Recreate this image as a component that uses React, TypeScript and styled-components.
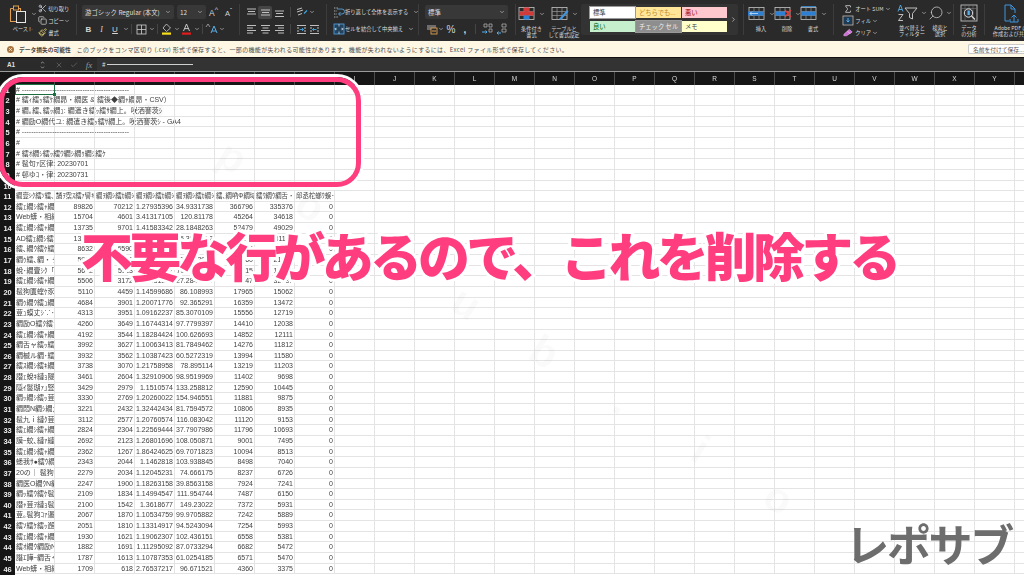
import React from "react";
import styled, { createGlobalStyle } from "styled-components";
import { Scissors, Copy, Paintbrush, Search, Sigma, ChevronDown, ChevronRight, ChevronUp, X, Check } from "lucide-react";

const Global = createGlobalStyle`
  html, body { margin: 0; padding: 0; background: #fff; overflow: hidden; }
  #root { width: 1024px; height: 576px; overflow: hidden; }
`;

const JP = `"Noto Sans CJK JP", "Noto Sans", sans-serif`;

const Page = styled.div`
  position: relative;
  width: 1024px;
  height: 576px;
  overflow: hidden;
  font-family: ${JP};
  background: #fff;
`;
const Blurred = styled.div`
  filter: blur(0.35px);
`;
const Ribbon = styled.div`
  display: flex;
  height: 41px;
  background: #2a2a2a;
  color: #dcdcdc;
  font-size: 5.6px;
  overflow: hidden;
`;
const Group = styled.div<{ $w: number; $pl?: number }>`
  flex: none;
  width: ${(p) => p.$w}px;
  padding-left: ${(p) => p.$pl ?? 0}px;
  box-sizing: border-box;
  display: flex;
`;
const Sep = styled.div`
  flex: none;
  width: 1px;
  height: 31px;
  margin-top: 4px;
  background: #3d3d3d;
`;
const Stack = styled.div`
  display: flex;
  flex-direction: column;
  padding-top: 5px;
  gap: 3px;
`;
const ThreeRows = styled.div`
  display: flex;
  flex-direction: column;
  padding-top: 3px;
  height: 38px;
  box-sizing: border-box;
  justify-content: space-between;
`;
const Line = styled.div`
  display: flex;
  align-items: center;
  height: 14px;
`;
const MiniLine = styled.div`
  display: flex;
  align-items: center;
  height: 11px;
  white-space: nowrap;
`;
const Tool = styled.span<{ $w: number; $active?: boolean }>`
  flex: none;
  width: ${(p) => p.$w}px;
  height: 13px;
  display: inline-flex;
  align-items: center;
  justify-content: center;
  border-radius: 2px;
  background: ${(p) => (p.$active ? "#454545" : "transparent")};
  svg { display: block; }
`;
const MiniSep = styled.span<{ $mx: number }>`
  flex: none;
  width: 1px;
  height: 10px;
  margin: 0 ${(p) => p.$mx}px;
  background: #454545;
`;
const Select = styled.div<{ $w: number; $ml?: number }>`
  flex: none;
  width: ${(p) => p.$w}px;
  margin-left: ${(p) => p.$ml ?? 0}px;
  height: 14px;
  box-sizing: border-box;
  padding: 0 3px;
  background: #383838;
  border-radius: 2px;
  display: flex;
  align-items: center;
  justify-content: space-between;
  font-size: 6.4px;
  color: #dedede;
  white-space: nowrap;
`;
const Letter = styled.span<{ $serif?: boolean; $bold?: boolean; $u?: boolean; $size?: number }>`
  font-family: ${(p) => (p.$serif ? `"Liberation Serif", serif` : `"Liberation Sans", sans-serif`)};
  font-style: ${(p) => (p.$serif ? "italic" : "normal")};
  font-weight: ${(p) => (p.$bold ? 700 : 400)};
  text-decoration: ${(p) => (p.$u ? "underline" : "none")};
  font-size: ${(p) => p.$size ?? 8}px;
  color: #d5d5d5;
`;
const Label = styled.div<{ $w: number }>`
  width: ${(p) => p.$w}px;
  display: flex;
  flex-direction: column;
  align-items: center;
  text-align: center;
  font-size: 5.2px;
  line-height: 6.4px;
  color: #dadada;
  white-space: nowrap;
`;
const BigTool = styled.div<{ $w: number; $top?: number }>`
  flex: none;
  width: ${(p) => p.$w}px;
  display: flex;
  flex-direction: column;
  align-items: center;
  padding-top: ${(p) => p.$top ?? 5}px;
`;
const BigIcon = styled.div`
  height: 18px;
  display: flex;
  align-items: center;
  gap: 2px;
  margin-bottom: 3px;
`;
const Mirror = styled.span`
  display: inline-flex;
  transform: scaleX(-1);
`;
const MiniText = styled.span<{ $w?: number }>`
  display: inline-block;
  ${(p) => (p.$w ? `width: ${p.$w}px;` : "")}
  font-size: 5.3px;
  color: #dcdcdc;
`;
const Gallery = styled.div`
  flex: none;
  width: 157px;
  height: 31px;
  margin-top: 4px;
  background: #333;
  border-radius: 2px;
  box-sizing: border-box;
  padding: 3px 0 0 9px;
  display: grid;
  grid-template-columns: repeat(3, 45px) 10px;
  grid-auto-rows: 11px;
  column-gap: 1px;
  row-gap: 3px;
  align-items: center;
`;
const StyleCell = styled.div<{ $bg: string; $fg: string; $ring?: boolean }>`
  height: 11px;
  background: ${(p) => p.$bg};
  color: ${(p) => p.$fg};
  font-size: 6.3px;
  line-height: 11px;
  padding-left: 3px;
  white-space: nowrap;
  overflow: hidden;
  box-sizing: border-box;
  outline: ${(p) => (p.$ring ? "1px solid #9a9a9a" : "none")};
`;
const GalleryArrow = styled.div`
  grid-column: 4;
  grid-row: 1 / span 2;
  display: flex;
  justify-content: center;
  color: #ccc;
`;

const Notice = styled.div`
  display: flex;
  align-items: center;
  height: 16px;
  background: #fef7e4;
  border-bottom: 1px solid #111;
  color: #4a4a4a;
  font-size: 5.75px;
  white-space: nowrap;
  padding-left: 7px;
`;
const NoticeIcon = styled.span`
  flex: none;
  width: 7px;
  height: 7px;
  border-radius: 50%;
  background: #a8743f;
  display: inline-flex;
  align-items: center;
  justify-content: center;
  color: #fef7e4;
  margin-right: 5px;
`;
const NoticeTitle = styled.b`
  font-weight: 700;
  margin-right: 6px;
  color: #444;
`;
const NoticeBody = styled.span`
  flex: 1;
  font-size: 6px;
  letter-spacing: 0.33px;
`;
const NoticeButton = styled.span`
  flex: none;
  width: 56px;
  height: 10px;
  line-height: 9px;
  box-sizing: border-box;
  background: #fff;
  border: 1px solid #c9c9c9;
  border-right: 0;
  border-radius: 2px 0 0 2px;
  padding-left: 4px;
  overflow: hidden;
  color: #555;
`;

const FormulaBar = styled.div`
  display: flex;
  align-items: center;
  height: 13px;
  background: #2b2b2b;
  border-bottom: 1px solid #9a9a9a;
  color: #dedede;
  font-size: 6.4px;
`;
const NameBox = styled.span`
  flex: none;
  width: 37px;
  padding-left: 7px;
  box-sizing: border-box;
  font-family: "Liberation Sans", sans-serif;
  font-weight: 700;
  font-size: 6.4px;
`;
const StepBox = styled.span`
  flex: none;
  width: 10px;
  display: inline-flex;
  flex-direction: column;
  align-items: center;
  margin-right: 4px;
  color: #ccc;
`;
const BarIcon = styled.span<{ $w: number }>`
  flex: none;
  width: ${(p) => p.$w}px;
  display: inline-flex;
  justify-content: center;
  color: #6e6e6e;
`;
const Fx = styled.span`
  flex: none;
  width: 16px;
  text-align: center;
  font-family: "Liberation Serif", serif;
  font-style: italic;
  font-size: 9px;
  color: #9a9a9a;
`;
const FormulaInput = styled.div`
  flex: 1;
  align-self: stretch;
  padding-left: 5px;
  background: #333;
  display: flex;
  align-items: center;
  overflow: hidden;
  gap: 1px;
`;
const FormulaDash = styled.span`
  width: 86px;
  height: 1px;
  background: #cfcfcf;
`;

const Sheet = styled.div`
  background: #fff;
`;
const HeaderRow = styled.div`
  display: flex;
  height: 12.8px;
  background: #161616;
  color: #d8d8d8;
  font-family: "Liberation Sans", sans-serif;
  font-size: 6.5px;
`;
const Corner = styled.div`
  flex: none;
  width: 15px;
  background: #161616;
`;
const ColHead = styled.div`
  flex: none;
  width: 40px;
  box-sizing: border-box;
  border-right: 1px solid #4c4c4c;
  display: flex;
  align-items: center;
  justify-content: center;
`;
const Row = styled.div`
  display: flex;
  height: 10.65px;
  box-sizing: border-box;
  border-bottom: 1px solid #e4e4e4;
`;
const RowHead = styled.div`
  flex: none;
  width: 15px;
  height: 11px;
  background: #161616;
  color: #eee;
  font-family: "Liberation Sans", sans-serif;
  font-weight: 700;
  font-size: 7.4px;
  line-height: 11.8px;
  text-align: center;
`;
const Cell = styled.div<{ $right?: boolean; $over?: boolean; $small?: boolean }>`
  flex: none;
  position: relative;
  width: 40px;
  box-sizing: border-box;
  border-right: 1px solid #e4e4e4;
  padding: 0 1px 0 1px;
  font-family: "Liberation Sans", ${JP};
  font-size: ${(p) => (p.$small ? 6.4 : 7)}px;
  line-height: 10.8px;
  color: #3f3f3f;
  text-align: ${(p) => (p.$right ? "right" : "left")};
  white-space: nowrap;
  overflow: ${(p) => (p.$over ? "visible" : "hidden")};
`;
const Selected = styled.div`
  position: absolute;
  left: 15px;
  top: 84px;
  width: 40px;
  height: 11px;
  box-sizing: border-box;
  border: 1.2px solid #1d6f42;
  pointer-events: none;
  &::after {
    content: "";
    position: absolute;
    right: -2px;
    bottom: -2px;
    width: 3px;
    height: 3px;
    background: #1d6f42;
  }
`;
const Watermark = styled.div`
  position: absolute;
  left: -10px;
  top: -10px;
  display: flex;
  transform-origin: 0 0;
  transform: translate(60px, 25px) rotate(32deg);
  font-family: "Liberation Sans", sans-serif;
  font-weight: 700;
  font-size: 42px;
  color: rgba(0, 0, 0, 0.018);
  pointer-events: none;
`;
const WatermarkChar = styled.span`
  width: 92px;
  text-align: center;
`;
const Highlight = styled.div`
  position: absolute;
  left: -1px;
  top: 77px;
  width: 362px;
  height: 110px;
  box-sizing: border-box;
  border: 5px solid #ff3d7f;
  border-radius: 24px;
  box-shadow: 0 0 0 3px #fff;
  pointer-events: none;
`;
const Caption = styled.div`
  position: absolute;
  left: 81px;
  top: 218px;
  font-family: ${JP};
  font-weight: 900;
  font-size: 52px;
  line-height: 74px;
  letter-spacing: -3.85px;
  white-space: nowrap;
  color: #ff3d7f;
  -webkit-text-stroke: 6px #fff;
  paint-order: stroke fill;
`;
const Logo = styled.div`
  position: absolute;
  right: 12px;
  top: 508px;
  font-family: ${JP};
  font-weight: 700;
  font-size: 44px;
  line-height: 70px;
  letter-spacing: -2.3px;
  color: #6d6d6d;
  white-space: nowrap;
`;

const Chev = () => <ChevronDown size={6} strokeWidth={2.4} color="#cfcfcf" />;

const Lines = ({ rows, w = 11, color = "#cfcfcf" }: { rows: number[][]; w?: number; color?: string }) => (
  <svg width={w} height="11" viewBox={`0 0 ${w} 11`} fill="none" stroke={color} strokeWidth="0.9">
    {rows.map((r, i) => (
      <line key={i} x1={r[0]} x2={r[1]} y1={r[2]} y2={r[2]} />
    ))}
  </svg>
);

const PasteIcon = () => (
  <svg width="20" height="18" viewBox="0 0 20 18" fill="none">
    <path d="M1.5 3.5h3M9 3.5h2.5V6M1.5 3.5V16.5H7" stroke="#e0a050" strokeWidth="1.1" />
    <rect x="4.5" y="1" width="5" height="4" fill="none" stroke="#e0a050" strokeWidth="1" />
    <rect x="7.5" y="6.5" width="9" height="11" fill="#2a2a2a" stroke="#e8e8e8" strokeWidth="1" />
  </svg>
);
const BorderIcon = () => (
  <svg width="11" height="11" viewBox="0 0 11 11" fill="none" stroke="#cfcfcf" strokeWidth="0.8">
    <rect x="1" y="1" width="9" height="9" />
    <path d="M1 5.5h9M5.5 1v9" />
  </svg>
);
const FillIcon = () => (
  <svg width="11" height="12" viewBox="0 0 11 12" fill="none">
    <path d="M5.5 1 9.5 5 5.5 8.5 2 5z" stroke="#cfcfcf" strokeWidth="0.8" />
    <rect x="1" y="9.5" width="9" height="2.2" fill="#f7e01a" />
  </svg>
);
const FontColorIcon = () => (
  <svg width="11" height="12" viewBox="0 0 11 12" fill="none">
    <path d="M2.5 8 5.5 1 8.5 8M3.6 5.6h3.8" stroke="#d5d5d5" strokeWidth="0.9" />
    <rect x="1" y="9.5" width="9" height="2.2" fill="#e01d1d" />
  </svg>
);
const Orient = () => (
  <svg width="13" height="11" viewBox="0 0 13 11" fill="none" stroke="#cfcfcf" strokeWidth="0.9">
    <path d="M1 2.5 6 1M1 5 7 3M2 8 6 6.5" />
    <path d="M8 6.5 11 3.5" stroke="#41a7e1" strokeWidth="1.1" />
  </svg>
);
const Abc = () => (
  <svg width="14" height="12" viewBox="0 0 14 12" fill="none">
    <path d="M1 4 3 1 5 4" stroke="#bdbdbd" strokeWidth="0.7" />
    <path d="M6 10 9 3 12 10M7 8h4" stroke="#58aee8" strokeWidth="1" />
  </svg>
);
const Indent = ({ flip }: { flip?: boolean }) => (
  <svg width="11" height="11" viewBox="0 0 11 11" fill="none" stroke="#cfcfcf" strokeWidth="0.9">
    <path d="M1 1.5h9M1 9.5h9M1 4h2M1 7h2M8 4h2M8 7h2" />
    <path d={flip ? "M7.5 5.5h-4M5 4 3.5 5.5 5 7" : "M3.5 5.5h4M6 4l1.5 1.5L6 7"} stroke="#41a7e1" />
  </svg>
);
const WrapIcon = () => (
  <svg width="12" height="13" viewBox="0 0 12 13" fill="none" stroke="#cfcfcf" strokeWidth="0.8">
    <path d="M1 2h4M1 5h3M1 8h3M1 11h4" strokeDasharray="1 .6" />
    <path d="M4 3h5a2 2 0 0 1 0 5H6M7.5 6 5.5 8 7.5 10" stroke="#5cb0ea" />
  </svg>
);
const MergeIcon = () => (
  <svg width="12" height="12" viewBox="0 0 12 12" fill="none">
    <rect x="1" y="1" width="10" height="10" stroke="#4f9ad8" strokeWidth="0.9" fill="#23425c" />
    <path d="M4 6H1.8M8 6h2.2M3 4.8 1.8 6 3 7.2M9 4.8 10.2 6 9 7.2M6 1v2.5M6 8.5V11" stroke="#d8e8f4" strokeWidth="0.7" />
  </svg>
);
const AccountIcon = () => (
  <svg width="12" height="12" viewBox="0 0 12 12" fill="none">
    <rect x="1" y="2" width="9" height="5" fill="#6d6d6d" />
    <rect x="5" y="5" width="6" height="6" fill="#2a2a2a" stroke="#e0a050" strokeWidth="0.9" />
    <path d="M6 8h4" stroke="#e0a050" strokeWidth="1" />
  </svg>
);
const Decimal = ({ flip }: { flip?: boolean }) => (
  <svg width="12" height="12" viewBox="0 0 12 12" fill="none" stroke="#bcbcbc" strokeWidth="0.7">
    <path d={flip ? "M6 1h4v3H6zM6 6h4v3H6z" : "M3 1h3v3H3zM8 1h3v3H8zM8 6h3v3H8z"} />
    <path d={flip ? "M5 10H1M2.5 8.5 1 10l1.5 1.5" : "M1 9h5M4.5 7.5 6 9l-1.5 1.5"} stroke="#58aee8" strokeWidth="1" />
  </svg>
);
const Table = ({ children, w = 19 }: { children?: React.ReactNode; w?: number }) => (
  <svg width={w} height="16" viewBox="0 0 19 16" fill="none">
    <rect x="1" y="1.5" width="15" height="12" stroke="#c6c6c6" strokeWidth="0.8" />
    <path d="M1 5.5h15M1 9.5h15M6 1.5v12M11 1.5v12" stroke="#9a9a9a" strokeWidth="0.7" />
    {children}
  </svg>
);
const HandIcon = () => (
  <svg width="13" height="11" viewBox="0 0 13 11" fill="none">
    <path d="M2 7.5 8 2l3 3-6 4H2z" fill="#cd6fd6" stroke="#e6a6ec" strokeWidth="0.7" />
    <path d="M6 4l3 3" stroke="#fff" strokeWidth="0.6" />
  </svg>
);
const FillDown = () => (
  <svg width="12" height="11" viewBox="0 0 12 11" fill="none">
    <rect x="1" y="1" width="10" height="9" stroke="#bfbfbf" strokeWidth="0.8" />
    <rect x="2" y="2" width="8" height="7" fill="#1d3a52" />
    <path d="M6 3v4M4.5 5.5 6 7l1.5-1.5" stroke="#5cb0ea" />
  </svg>
);
const SortIcon = () => (
  <svg width="22" height="18" viewBox="0 0 22 18" fill="none">
    <path d="M1 7.5 3.5 1 6 7.5M2 5.5h3" stroke="#58aee8" strokeWidth="0.9" />
    <path d="M1.5 10.5H6L1.5 16.5H6" stroke="#cfcfcf" strokeWidth="0.9" />
    <path d="M8 4h12L15.5 9.5V15l-3-1.5v-4z" stroke="#cfcfcf" strokeWidth="0.9" />
  </svg>
);
const DataIcon = () => (
  <svg width="18" height="19" viewBox="0 0 18 19" fill="none">
    <rect x="1" y="1" width="16" height="16" stroke="#bdbdbd" strokeWidth="0.9" />
    <path d="M1 4.5h16M5 1v16M9 1v4M13 1v16" stroke="#777" strokeWidth="0.6" />
    <circle cx="8.5" cy="9" r="4.2" fill="#30343a" stroke="#ddd" strokeWidth="1" />
    <rect x="7.5" y="6.5" width="2.3" height="4.5" fill="#5cb0ea" />
    <path d="M11.5 12 15 15.5" stroke="#ddd" strokeWidth="1.2" />
  </svg>
);
const PdfIcon = () => (
  <svg width="16" height="19" viewBox="0 0 16 19" fill="none" stroke="#3f95e0" strokeWidth="1">
    <path d="M6 17H2V1h6l4 4v4M8 1v4h4" />
    <path d="M11 18V11M8.5 13.5 11 11l2.5 2.5M7 15v3h8v-3" />
  </svg>
);

const cols = "ABCDEFGHIJKLMNOPQRSTUVWXYZ".split("").concat("AA");
const dashes = "# " + "-".repeat(46);

const topText: Record<number, string> = {
  1: dashes,
  2: "# 繧ｨ繧ｯ繧ｹ繝昴・繝医 & 繧後◆繝ｬ繝昴・CSV）",
  3: "# 繝｡繧､繧ｯ繝ｭ: 繝遣き繧ｯ繧ｻ繝上。咲洒謇茨ｼ",
  4: "# 繝励Ο繝代ユ: 繝遣き繧ｯ繧ｻ繝上。咲洒謇茨ｼ - GA4",
  5: dashes,
  6: "#",
  7: "# 繧ｵ繝ｼ繧ｯ繧ｳ繝ｼ繝ｩ繝ｼ繧ｹ",
  8: "# 髢句ｧ区律: 20230701",
  9: "# 邨ゆｺ・律: 20230731",
};

const headers = [
  "繝壹ｼｸ繧ｿ繧､繝医Ν",
  "譎ｦ霑ｽ繧ｧ譬ｷ莠ｺ謨ｰ",
  "繝ｦ繝ｼ繧ｶ繝ｼ繝ｼ",
  "繝ｦ繝ｼ繧ｶ繝ｼ繧ｯ",
  "繝ｦ繝ｼ繧ｶ繝ｼ縺ｰ",
  "繧､繝吶Φ繝域焚",
  "繧ｳ繝ｳ繝舌・繧ｸ",
  "邱丞柁螂ｳ蜈･縺",
];

const rowData: [string, string, string, string, string, string, string][] = [
  ["89826", "70212", "1.27935396", "34.9331738", "366796", "335376", "0"],
  ["15704", "4601", "3.41317105", "120.81178", "45264", "34618", "0"],
  ["13735", "9701", "1.41583342", "28.1848263", "52479", "49029", "0"],
  ["13241", "8216", "1.61160443", "25.3854122", "34117", "31110", "0"],
  ["8632", "6590", "1.30986342", "41.7301437", "29312", "26118", "0"],
  ["5904", "5110", "1.15537475", "61.3022941", "24960", "21045", "0"],
  ["5602", "5113", "1.09563857", "70.4125113", "22015", "18362", "0"],
  ["5506", "3172", "1.73581337", "27.2842754", "34347", "32087", "0"],
  ["5110", "4459", "1.14599686", "86.108993", "17965", "15062", "0"],
  ["4684", "3901", "1.20071776", "92.365291", "16359", "13472", "0"],
  ["4313", "3951", "1.09162237", "85.3070109", "15556", "12719", "0"],
  ["4260", "3649", "1.16744314", "97.7799397", "14410", "12038", "0"],
  ["4192", "3544", "1.18284424", "100.626693", "14852", "12111", "0"],
  ["3992", "3627", "1.10063413", "81.7849462", "14276", "11812", "0"],
  ["3932", "3562", "1.10387423", "60.5272319", "13994", "11580", "0"],
  ["3738", "3070", "1.21758958", "78.895114", "13219", "11203", "0"],
  ["3461", "2604", "1.32910906", "98.9519969", "11402", "9698", "0"],
  ["3429", "2979", "1.1510574", "133.258812", "12590", "10445", "0"],
  ["3330", "2769", "1.20260022", "154.946551", "11881", "9875", "0"],
  ["3221", "2432", "1.32442434", "81.7594572", "10806", "8935", "0"],
  ["3112", "2577", "1.20760574", "116.083042", "11120", "9153", "0"],
  ["2824", "2304", "1.22569444", "37.7907986", "11796", "10693", "0"],
  ["2692", "2123", "1.26801696", "108.050871", "9001", "7495", "0"],
  ["2362", "1267", "1.86424625", "69.7071823", "10094", "8513", "0"],
  ["2343", "2044", "1.1462818", "103.938845", "8498", "7040", "0"],
  ["2279", "2034", "1.12045231", "74.666175", "8237", "6726", "0"],
  ["2247", "1900", "1.18263158", "39.8563158", "7924", "7241", "0"],
  ["2109", "1834", "1.14994547", "111.954744", "7487", "6150", "0"],
  ["2100", "1542", "1.3618677", "149.23022", "7372", "5931", "0"],
  ["2067", "1870", "1.10534759", "99.9705882", "7242", "5889", "0"],
  ["2051", "1810", "1.13314917", "94.5243094", "7254", "5993", "0"],
  ["1930", "1621", "1.19062307", "102.436151", "6558", "5381", "0"],
  ["1882", "1691", "1.11295092", "87.0733294", "6682", "5472", "0"],
  ["1787", "1613", "1.10787353", "61.0254185", "6571", "5470", "0"],
  ["1709", "618", "2.76537217", "96.671521", "4360", "3375", "0"],
];

const labels = [
  "繧ｪ繝ｼ繧ｬ繝九ャ繧ｯ讀懃ｴ｢",
  "Web蠎・相繝ｻ繝ｻ",
  "繧ｪ繝ｼ繧ｬ繝九ャ繧ｯ讀懃ｴ｢",
  "AD繧ｪ繝ｼ繧ｬ繝九ャ繧ｯ",
  "繧､繝ｳ繧ｹ繧ｿ繧ｰ繝ｩ繝",
  "繝ｩ繧､繝・ぅ繝ｳ繧ｰ",
  "蛻･繝壹ｼｸ「繧ｵ繧､繝",
  "繧ｪ繝ｼ繧ｬ繝九ャ繧ｯ讀懃ｴ｢",
  "髢狗匱螳ｹ豕穂ｺｺ",
  "繝ｩ繝ｳ繧ｭ繝ｳ繧ｰ鬆",
  "荳ｭ蟆丈ｼ∵･ｭ繝ｯ繝ｼ繧ｯ",
  "繝励Ο繧ｸ繧ｧ繧ｯ繝",
  "繧ｪ繝ｼ繧ｬ繝九ャ繧ｵ",
  "繝舌ャ繧ｯ繧ｪ繝輔ぅ",
  "繝槭ル繝･繧｢繝ｫ縲",
  "繧ｽ繝ｼ繧ｷ繝｣繝ｫ",
  "譛ｪ蛻ｷ縺ｮ隧ｳ邏ｰ",
  "隱ｲ鬘瑚ｧ｣豎ｺ縺ｮ",
  "繝ｯ繝ｼ繧ｯ荳ｭ縲",
  "繝悶Ν繝ｼ繝九Ο繧",
  "髢九ｉ縺ｸ荳九≠",
  "繧ｪ繝ｼ繧ｬ繝九ャ繧ｯ",
  "謨ｰ蛟､縺ｧ縺ｿ繧",
  "繧ｪ繝ｼ繧ｬ繝九ャ繧ｯ",
  "蟋我ｻ●繧ｳ繝ｼ繝",
  "20の｜ 髢狗匱",
  "繝医Ο繝ｳN繝ｼ",
  "繝ｯ繧ｳ繧ｹ髢狗匱",
  "譛ｬ荳ｦ縺ｮ髢狗匱",
  "荳｡髢狗ｺｧ遏･",
  "繧ｿ繧ｹ繧ｯ邂｡逅",
  "繧ｪ繝ｼ繧ｬ繝九ャ",
  "繧ｵ繝ｳ繝励Ν髢",
  "譖ｴ譁ｰ繝舌ャ繧ｸ",
  "Web蠎・相繝ｻ繝ｻ",
];

const EmptyCells = ({ n }: { n: number }) => (
  <>
    {Array.from({ length: n }, (_, i) => (
      <Cell key={i} />
    ))}
  </>
);

export default function App() {
  return (
    <Page>
      <Global />
      <Blurred>
        <Ribbon>
          <Group $w={76} $pl={8}>
            <BigTool $w={30}>
              <BigIcon>
                <PasteIcon />
                <Chev />
              </BigIcon>
              <Label $w={30}>ペースト</Label>
            </BigTool>
            <ThreeRows>
              <MiniLine>
                <Tool $w={9}><Scissors size={9} color="#cfd6e0" /></Tool>
                <MiniText>&nbsp;切り取り</MiniText>
              </MiniLine>
              <MiniLine>
                <Tool $w={9}><Copy size={9} color="#cfcfcf" /></Tool>
                <MiniText>&nbsp;コピー</MiniText>
                <Chev />
              </MiniLine>
              <MiniLine>
                <Tool $w={9}><Paintbrush size={9} color="#e6d27a" /></Tool>
                <MiniText>&nbsp;書式</MiniText>
              </MiniLine>
            </ThreeRows>
          </Group>
          <Sep />
          <Group $w={162} $pl={5}>
            <Stack>
              <Line>
                <Select $w={92}>游ゴシック Regular (本文)<Chev /></Select>
                <Select $w={29} $ml={3}>12<Chev /></Select>
                <Tool $w={15}><Letter $size={8.5}>A<sup>^</sup></Letter></Tool>
                <Tool $w={15}><Letter $size={7.5}>A<sup>ˇ</sup></Letter></Tool>
              </Line>
              <Line>
                <Tool $w={13}><Letter $bold>B</Letter></Tool>
                <Tool $w={13}><Letter $serif>I</Letter></Tool>
                <Tool $w={14}><Letter $u>U</Letter></Tool>
                <Tool $w={7}><Chev /></Tool>
                <MiniSep $mx={2} />
                <Tool $w={14}><BorderIcon /></Tool>
                <Tool $w={7}><Chev /></Tool>
                <MiniSep $mx={2} />
                <Tool $w={13}><FillIcon /></Tool>
                <Tool $w={7}><Chev /></Tool>
                <Tool $w={13}><FontColorIcon /></Tool>
                <Tool $w={7}><Chev /></Tool>
                <MiniSep $mx={2} />
                <Tool $w={14}><Abc /></Tool>
                <Tool $w={6}><Chev /></Tool>
              </Line>
            </Stack>
          </Group>
          <Sep />
          <Group $w={86} $pl={4}>
            <Stack>
              <Line>
                <Tool $w={14}><Lines rows={[[1, 10, 2], [2, 9, 4.5], [1, 10, 7]]} /></Tool>
                <Tool $w={14} $active><Lines rows={[[1, 10, 3], [2, 9, 5.5], [1, 10, 8]]} /></Tool>
                <Tool $w={14}><Lines rows={[[1, 10, 4], [2, 9, 6.5], [1, 10, 9.5]]} /></Tool>
                <MiniSep $mx={4} />
                <Tool $w={14}><Orient /></Tool>
                <Tool $w={6}><Chev /></Tool>
              </Line>
              <Line>
                <Tool $w={14}><Lines rows={[[1, 10, 1.5], [1, 7, 4], [1, 10, 6.5], [1, 7, 9]]} /></Tool>
                <Tool $w={14}><Lines rows={[[1, 10, 1.5], [2.5, 8.5, 4], [1, 10, 6.5], [2.5, 8.5, 9]]} /></Tool>
                <Tool $w={14}><Lines rows={[[1, 10, 1.5], [4, 10, 4], [1, 10, 6.5], [4, 10, 9]]} /></Tool>
                <MiniSep $mx={4} />
                <Tool $w={13}><Indent /></Tool>
                <Tool $w={13}><Indent flip /></Tool>
              </Line>
            </Stack>
          </Group>
          <Sep />
          <Group $w={91} $pl={5}>
            <Stack>
              <Line>
                <Tool $w={13}><WrapIcon /></Tool>
                <MiniText $w={68}>折り返して全体を表示する</MiniText>
                <Chev />
              </Line>
              <Line>
                <Tool $w={13}><MergeIcon /></Tool>
                <MiniText $w={63}>セルを結合して中央揃え</MiniText>
                <Chev />
              </Line>
            </Stack>
          </Group>
          <Sep />
          <Group $w={96} $pl={6}>
            <Stack>
              <Line>
                <Select $w={83}>標準<Chev /></Select>
              </Line>
              <Line>
                <Tool $w={13}><AccountIcon /></Tool>
                <Tool $w={6}><Chev /></Tool>
                <Tool $w={14}><Letter $size={10}>%</Letter></Tool>
                <Tool $w={14}><Letter $bold $size={10}>,</Letter></Tool>
                <MiniSep $mx={3} />
                <Tool $w={16}><Decimal /></Tool>
                <Tool $w={14}><Decimal flip /></Tool>
              </Line>
            </Stack>
          </Group>
          <Sep />
          <Group $w={65} $pl={0}>
            <BigTool $w={31}>
              <BigIcon>
                <Table w={19}>
                  <rect x="6" y="1.5" width="5" height="4" fill="#d33a3a" />
                  <rect x="1" y="5.5" width="15" height="4" fill="#d33a3a" />
                  <rect x="6" y="9.5" width="5" height="4" fill="#2d7fd3" />
                </Table>
                <Chev />
              </BigIcon>
              <Label $w={31}><span>条件付き</span><span>書式</span></Label>
            </BigTool>
            <BigTool $w={34}>
              <BigIcon>
                <Table w={19}>
                  <path d="M8 13 16 4l1.5 1.5L10 14z" fill="#3f95e0" />
                </Table>
                <Chev />
              </BigIcon>
              <Label $w={34}><span>テーブルと</span><span>して書式設定</span></Label>
            </BigTool>
          </Group>
          <Gallery>
            <StyleCell $bg="#ffffff" $fg="#333" $ring>標準</StyleCell>
            <StyleCell $bg="#ffe699" $fg="#b8862b">どちらでも...</StyleCell>
            <StyleCell $bg="#ffc7ce" $fg="#9c0006">悪い</StyleCell>
            <GalleryArrow><ChevronRight size={7} strokeWidth={2.4} /></GalleryArrow>
            <StyleCell $bg="#c6efce" $fg="#006100">良い</StyleCell>
            <StyleCell $bg="#8e8e8e" $fg="#f0f0f0" $ring>チェック セル</StyleCell>
            <StyleCell $bg="#ffffcc" $fg="#444">メモ</StyleCell>
          </Gallery>
          <Group $w={5} />
          <Sep />
          <Group $w={89} $pl={4}>
            <BigTool $w={26}>
              <BigIcon>
                <Table w={19}>
                  <rect x="0" y="5.5" width="16" height="4" fill="#2d7fd3" />
                  <path d="M10 7.5H2M4 5.5 2 7.5l2 2" stroke="#cfe6fa" strokeWidth="0.8" />
                </Table>
                <Chev />
              </BigIcon>
              <Label $w={26}>挿入</Label>
            </BigTool>
            <BigTool $w={26}>
              <BigIcon>
                <Table w={19}>
                  <rect x="1" y="5.5" width="10" height="4" fill="#2d7fd3" />
                  <path d="M11 4l6 7M17 4l-6 7" stroke="#e0403a" strokeWidth="1.2" />
                </Table>
                <Chev />
              </BigIcon>
              <Label $w={26}>削除</Label>
            </BigTool>
            <BigTool $w={26}>
              <BigIcon>
                <Table w={19}>
                  <rect x="1" y="5.5" width="15" height="4" fill="#2d7fd3" />
                  <path d="M1 0.6h15" stroke="#3f95e0" strokeWidth="0.9" />
                </Table>
                <Chev />
              </BigIcon>
              <Label $w={26}>書式</Label>
            </BigTool>
          </Group>
          <Sep />
          <Group $w={63} $pl={8}>
            <ThreeRows>
              <MiniLine>
                <Tool $w={12}><Sigma size={10} color="#cfcfcf" /></Tool>
                <MiniText>&nbsp;オート SUM&nbsp;</MiniText>
                <Chev />
              </MiniLine>
              <MiniLine>
                <Tool $w={12}><FillDown /></Tool>
                <MiniText>&nbsp;フィル&nbsp;</MiniText>
                <Chev />
              </MiniLine>
              <MiniLine>
                <Tool $w={12}><HandIcon /></Tool>
                <MiniText>&nbsp;クリア&nbsp;</MiniText>
                <Chev />
              </MiniLine>
            </ThreeRows>
          </Group>
          <Group $w={30}>
            <BigTool $w={30} $top={4}>
              <BigIcon>
                <SortIcon />
                <Chev />
              </BigIcon>
              <Label $w={30}><span>並べ替えと</span><span>フィルター</span></Label>
            </BigTool>
          </Group>
          <Group $w={26}>
            <BigTool $w={26} $top={4}>
              <BigIcon>
                <Mirror><Search size={16} color="#d5d5d5" strokeWidth={1.1} /></Mirror>
                <Chev />
              </BigIcon>
              <Label $w={26}><span>検索と</span><span>選択</span></Label>
            </BigTool>
          </Group>
          <Sep />
          <Group $w={30}>
            <BigTool $w={30} $top={4}>
              <BigIcon>
                <DataIcon />
              </BigIcon>
              <Label $w={30}><span>データ</span><span>の分析</span></Label>
            </BigTool>
          </Group>
          <Sep />
          <Group $w={52}>
            <BigTool $w={52} $top={4}>
              <BigIcon>
                <PdfIcon />
              </BigIcon>
              <Label $w={52}><span>Adobe PDF の</span><span>作成および共有</span></Label>
            </BigTool>
          </Group>
        </Ribbon>
        <Notice>
          <NoticeIcon><X size={5} strokeWidth={3.4} /></NoticeIcon>
          <NoticeTitle>データ損失の可能性</NoticeTitle>
          <NoticeBody>このブックをコンマ区切り (.csv) 形式で保存すると、一部の機能が失われる可能性があります。機能が失われないようにするには、Excel ファイル形式で保存してください。</NoticeBody>
          <NoticeButton>名前を付けて保存...</NoticeButton>
        </Notice>
        <FormulaBar>
          <NameBox>A1</NameBox>
          <StepBox>
            <ChevronUp size={5} strokeWidth={3} />
            <ChevronDown size={5} strokeWidth={3} />
          </StepBox>
          <BarIcon $w={15}><X size={8} /></BarIcon>
          <BarIcon $w={15}><Check size={8} /></BarIcon>
          <Fx>fx</Fx>
          <FormulaInput>#<FormulaDash /></FormulaInput>
        </FormulaBar>
        <Sheet>
          <HeaderRow>
            <Corner />
            {cols.map((c) => (
              <ColHead key={c}>{c}</ColHead>
            ))}
          </HeaderRow>
          {Array.from({ length: 9 }, (_, i) => (
            <Row key={i}>
              <RowHead>{i + 1}</RowHead>
              <Cell $over>{topText[i + 1]}</Cell>
              <EmptyCells n={26} />
            </Row>
          ))}
          <Row>
            <RowHead>10</RowHead>
            <EmptyCells n={27} />
          </Row>
          <Row>
            <RowHead>11</RowHead>
            {headers.map((h, i) => (
              <Cell key={i} $small>{h}</Cell>
            ))}
            <EmptyCells n={19} />
          </Row>
          {rowData.map((d, i) => (
            <Row key={i}>
              <RowHead>{i + 12}</RowHead>
              <Cell>{labels[i]}</Cell>
              {d.map((v, j) => (
                <Cell key={j} $right>{v}</Cell>
              ))}
              <EmptyCells n={19} />
            </Row>
          ))}
        </Sheet>
      </Blurred>
      <Watermark>
        {"reposub.io".split("").map((c, i) => (
          <WatermarkChar key={i}>{c}</WatermarkChar>
        ))}
      </Watermark>
      <Selected />
      <Highlight />
      <Caption>不要な行があるので、これを削除する</Caption>
      <Logo>レポサブ</Logo>
    </Page>
  );
}
